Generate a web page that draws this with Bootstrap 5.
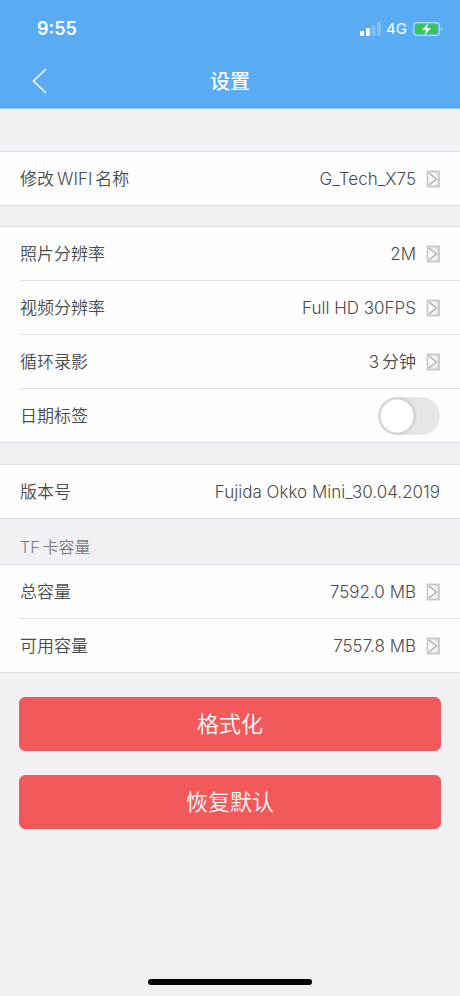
<!DOCTYPE html>
<html lang="zh-CN">
<head>
<meta charset="utf-8">
<meta name="viewport" content="width=device-width, initial-scale=1">
<title>设置</title>
<link href="https://cdn.jsdelivr.net/npm/bootstrap@5.3.0/dist/css/bootstrap.min.css" rel="stylesheet">
<style>
  body { background: #f0f0f5; color: #4b4b4b; font-family: Inter, "Noto Sans CJK SC", sans-serif; font-size: 17px; line-height: 24px; }
  .topbar { background: #59abf4; border-bottom: 1px solid #a9c9ea; margin-bottom: 42px; }
  .status { height: 54px; padding: 4px 17px 0 37px; }
  .clock { font-size: 18px; font-weight: 600; }
  .carrier { font-size: 15px; font-weight: 400; margin: 0 6px 0 5px; }
  .titlebar { display: grid; grid-template-columns: 60px 1fr 60px; height: 54px; align-items: center; }
  .titlebar h1 { font-size: 20px; line-height: 28px; font-weight: 500; padding-top: 2px; }
  .group { background: #fefefe; border-top: 1px solid #dfdfe3; border-bottom: 1px solid #dfdfe3; padding-left: 20px; }
  .entry { height: 53px; padding: 0 20px 0 0; color: inherit; font-size: 17px; font-weight: 350; line-height: 24px; border: 0; background: none; text-align: left; }
  .entry + .entry { border-top: 1px solid #e0e0e2; height: 54px; }
  .gap-a { margin-bottom: 20px; }
  .gap-b { margin-bottom: 21px; }
  .latin { margin: 0 3px; font-family: Inter, sans-serif; line-height: 1; }
  .latin-start { margin-right: 3px; font-family: Inter, sans-serif; line-height: 1; }
  .go { margin-left: 10px; }
  .section-title { height: 45px; padding: 15px 20px 0; font-size: 16px; color: #7c7c81; line-height: 24px; }
  .form-switch .toggle { width: 62px; height: 38px; margin: 0; border: 0; background-color: #e6e6e6; background-image: radial-gradient(circle at 19px 19px, #fff 16px, #d2d2d2 17px, #e6e6e6 21px); background-size: 100% 100%; background-position: left center; }
  .actions { padding: 24px 19px 0; gap: 24px; }
  .action { height: 54px; padding: 0 0 3px; border-radius: 6px; font-size: 22px; --bs-btn-bg: #f2595b; --bs-btn-border-color: #f2595b; --bs-btn-color: #fff; }
  .cjk { font-family: "Noto Sans CJK SC", sans-serif; font-weight: 350; }
  .entry .cjk { padding-bottom: 1px; }
  .home { width: 164px; height: 6px; margin-bottom: 11px; background: #000; }
</style>
<script src="https://cdn.jsdelivr.net/npm/bootstrap@5.3.0/dist/js/bootstrap.bundle.min.js" defer></script>
</head>
<body class="min-vh-100 d-flex flex-column">
<svg class="d-none" aria-hidden="true">
  <symbol id="go" viewBox="0 0 14 18">
    <path d="M1.500 1.500H13V16.500H1.500Z" fill="none" stroke="#c9c9c9" stroke-width="1.800"/>
    <path d="M3 3L10.500 9L3 15" fill="none" stroke="#bdbdbd" stroke-width="2"/>
    <path d="M8 2H13V16H8L12 9Z" fill="#c9c9c9" opacity=".4"/>
  </symbol>
</svg>
<header class="topbar text-white">
  <div class="status d-flex justify-content-between align-items-center">
    <span class="clock">9:55</span>
    <div class="d-flex align-items-center">
      <svg width="22" height="14" viewBox="0 0 22 14" fill="#fff" aria-hidden="true">
        <rect x="1" y="9" width="4" height="5" rx="1"/><rect x="7" y="6" width="4" height="8" rx="1"/>
        <rect x="12.500" y="3" width="4" height="11" rx="1" opacity=".25"/><rect x="18" y="0" width="4" height="14" rx="1" opacity=".25"/>
      </svg>
      <span class="carrier">4G</span>
      <svg width="30" height="14" viewBox="0 0 30 14" aria-hidden="true">
        <rect x=".6" y=".6" width="25.800" height="12.800" rx="3.500" fill="none" stroke="#b9dbf8" stroke-width="1.200"/>
        <rect x="2.200" y="2.200" width="22.600" height="9.600" rx="2" fill="#34c85a"/>
        <path d="M28 5V9Q29.500 8.500 29.500 7T28 5Z" fill="#b9dbf8"/>
        <path d="M15.500 1L9 8H13L11.500 13L18 6H14Z" fill="#fff"/>
      </svg>
    </div>
  </div>
  <div class="titlebar">
    <button type="button" class="btn p-0 ps-4 text-start border-0" aria-label="返回">
      <svg class="ms-2" width="15" height="26" viewBox="0 0 15 26" fill="none" stroke="#fff" stroke-width="1.500" aria-hidden="true"><path d="M14 1L1.500 13L14 25"/></svg>
    </button>
    <h1 class="m-0 text-center">设置</h1>
  </div>
</header>
<main>
  <section class="group gap-a">
    <button type="button" class="entry w-100 d-flex align-items-center"><span class="me-auto cjk">修改<span class="latin">WIFI</span>名称</span><span>G_Tech_X75</span><svg class="go" width="14" height="18" aria-hidden="true"><use href="#go"/></svg></button>
  </section>
  <section class="group gap-b">
    <button type="button" class="entry w-100 d-flex align-items-center"><span class="me-auto cjk">照片分辨率</span><span>2M</span><svg class="go" width="14" height="18" aria-hidden="true"><use href="#go"/></svg></button>
    <button type="button" class="entry w-100 d-flex align-items-center"><span class="me-auto cjk">视频分辨率</span><span>Full HD 30FPS</span><svg class="go" width="14" height="18" aria-hidden="true"><use href="#go"/></svg></button>
    <button type="button" class="entry w-100 d-flex align-items-center"><span class="me-auto cjk">循环录影</span><span class="cjk"><span class="latin-start">3</span>分钟</span><svg class="go" width="14" height="18" aria-hidden="true"><use href="#go"/></svg></button>
    <div class="entry d-flex align-items-center form-switch ps-0">
      <label class="me-auto cjk" for="date-stamp">日期标签</label>
      <input class="form-check-input toggle" type="checkbox" role="switch" id="date-stamp">
    </div>
  </section>
  <section class="group">
    <div class="entry d-flex align-items-center"><span class="me-auto cjk">版本号</span><span>Fujida Okko Mini_30.04.2019</span></div>
  </section>
  <h2 class="section-title m-0 cjk"><span class="latin-start">TF</span>卡容量</h2>
  <section class="group">
    <button type="button" class="entry w-100 d-flex align-items-center"><span class="me-auto cjk">总容量</span><span>7592.0 MB</span><svg class="go" width="14" height="18" aria-hidden="true"><use href="#go"/></svg></button>
    <button type="button" class="entry w-100 d-flex align-items-center"><span class="me-auto cjk">可用容量</span><span>7557.8 MB</span><svg class="go" width="14" height="18" aria-hidden="true"><use href="#go"/></svg></button>
  </section>
  <div class="actions d-grid">
    <button type="button" class="btn btn-danger action cjk">格式化</button>
    <button type="button" class="btn btn-danger action cjk">恢复默认</button>
  </div>
</main>
<div class="home rounded-pill mx-auto mt-auto"></div>
</body>
</html>
